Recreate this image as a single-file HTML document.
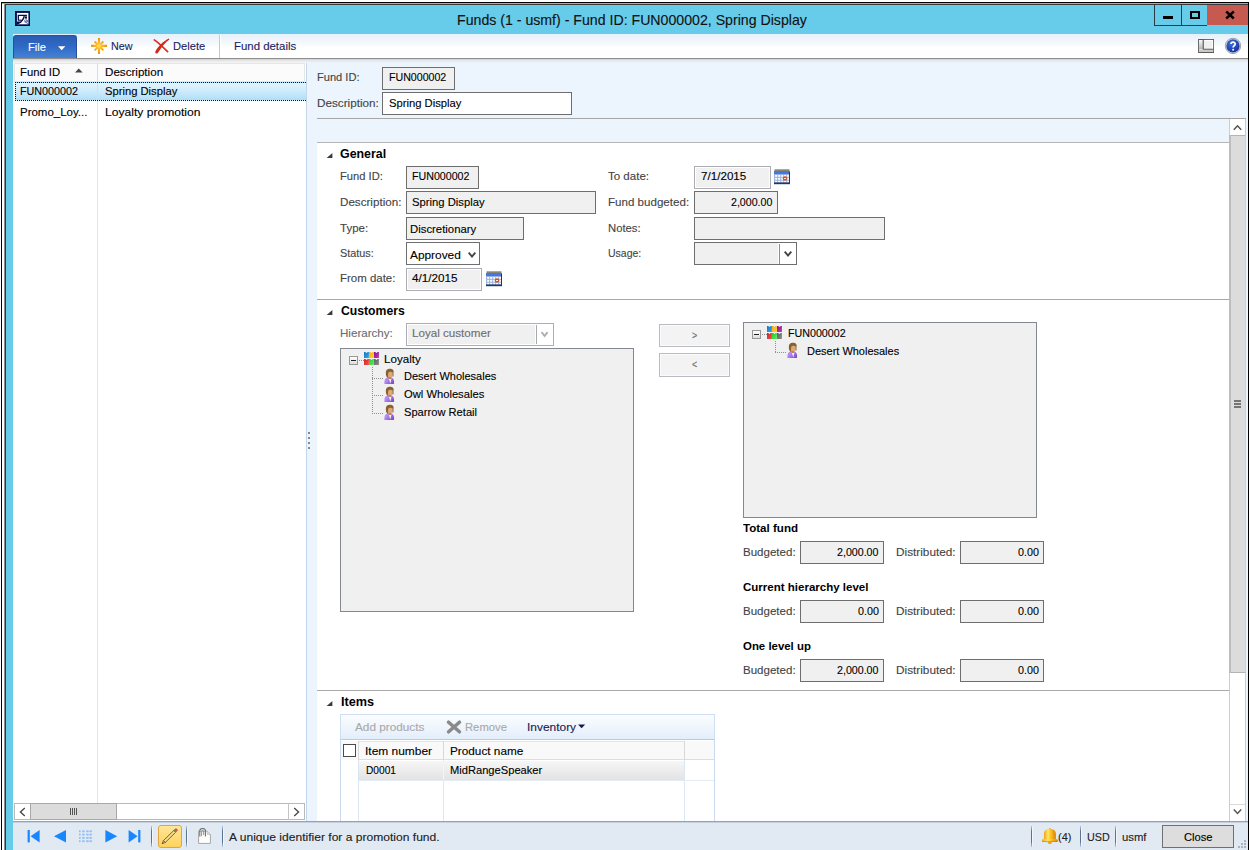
<!DOCTYPE html>
<html><head><meta charset="utf-8"><title>Funds</title>
<style>
html,body{margin:0;padding:0;}
body{width:1250px;height:850px;overflow:hidden;background:#fff;position:relative;font-family:"Liberation Sans",sans-serif;font-size:11.5px;}
.a{position:absolute;box-sizing:border-box;}
.t{position:absolute;white-space:nowrap;line-height:1;transform-origin:0 0;display:block;-webkit-text-stroke:0.12px currentColor;}
</style></head><body>
<div class="a" style="left:1px;top:2px;width:1248px;height:848px;background:#000;"></div>
<div class="a" style="left:2px;top:3px;width:1246px;height:847px;background:#fff;"></div>
<div class="a" style="left:2px;top:3px;width:1246px;height:1px;background:#aaa;"></div>
<div class="a" style="left:4px;top:4px;width:1244px;height:846px;background:#3a3a3a;"></div>
<div class="a" style="left:4px;top:4px;width:1px;height:846px;background:#8a8a8a;"></div>
<div class="a" style="left:6px;top:5px;width:1242px;height:845px;background:#67cbea;"></div>
<svg class="a" style="left:15px;top:11px" width="15" height="15" viewBox="0 0 15 15"><rect width="15" height="15" fill="#020a48"/><rect x="1.9" y="1.9" width="11.5" height="11.4" fill="#fff"/><path d="M3.3 9.6 V4.3 H11.9" stroke="#020a48" stroke-width="1.3" fill="none"/><path d="M3.3 9.2 H6.4" stroke="#020a48" stroke-width="1.1" fill="none"/><path d="M1.9 13.3 L1.9 10.6 L5.4 10.6 L7.6 7.6 L8.6 4.9 L9.8 4.9 L8.6 8.8 L6 11.8 L3 13.3 Z" fill="#020a48"/><rect x="9.6" y="5.4" width="2.4" height="2.2" fill="#020a48"/><path d="M9.2 9 L11.2 8.2 L13.4 9.6 L13.4 13.3 L9.4 11.2 Z" fill="#6f7aa6"/><path d="M10.2 9.4 L11.4 10.2 M12.2 11 L13 12" stroke="#fff" stroke-width="0.8"/></svg>
<div class="a" style="left:1154px;top:5px;width:53px;height:21px;background:#2b3b44;"></div>
<div class="a" style="left:1155px;top:5px;width:26px;height:20px;background:#67cbea;"></div>
<div class="a" style="left:1182px;top:5px;width:25px;height:20px;background:#67cbea;"></div>
<div class="a" style="left:1207px;top:5px;width:41px;height:20px;background:#c75a50;"></div>
<div class="a" style="left:1163px;top:16px;width:10px;height:3px;background:#000;"></div>
<div class="a" style="left:1190px;top:11px;width:10px;height:8px;border:1px solid #000;border-width:2px;"></div>
<svg class="a" style="left:1225px;top:10px" width="10" height="10" viewBox="0 0 10 10"><path d="M1.2 1.5 L8.8 8.5 M8.8 1.5 L1.2 8.5" stroke="#000" stroke-width="2.4" fill="none"/></svg>
<div class="a" style="left:13px;top:34px;width:1235px;height:24px;background:linear-gradient(#e6f0fa 0%,#f3f8fd 35%,#fff 60%,#fff 100%);"></div>
<div class="a" style="left:13px;top:58px;width:1235px;height:1px;background:#8e8e8e;"></div>
<div class="a" style="left:13px;top:35px;width:64px;height:23px;background:linear-gradient(#2a5db4 0%,#2f68c4 45%,#4583d6 100%);border:1px solid #27509a;border-bottom:none;border-radius:3px 3px 0 0;"></div>
<svg class="a" style="left:58px;top:46px" width="8" height="5" viewBox="0 0 8 5"><path d="M0 0.3 L7.4 0.3 L3.7 4.3 Z" fill="#fff"/></svg>
<svg class="a" style="left:90px;top:37px" width="18" height="18" viewBox="0 0 18 18"><defs><radialGradient id="sun" gradientUnits="userSpaceOnUse" cx="9" cy="8.9" r="8.2"><stop offset="0" stop-color="#ffe25a"/><stop offset="0.4" stop-color="#fdb728"/><stop offset="1" stop-color="#e8900e"/></radialGradient></defs><g stroke="url(#sun)" fill="none"><path d="M9 0.9 V16.9 M1 8.9 H17" stroke-width="2.1"/><path d="M4.6 4.5 L13.4 13.3 M13.4 4.5 L4.6 13.3" stroke-width="1.9"/></g><circle cx="9" cy="8.9" r="3.4" fill="url(#sun)"/></svg>
<svg class="a" style="left:153px;top:37px" width="18" height="18" viewBox="0 0 18 18"><path d="M1.3 2.9 C5.4 5.6 10 10.4 14.6 14.6" stroke="#d9321f" stroke-width="1.7" fill="none" stroke-linecap="round"/><path d="M15.9 1.6 C10.4 4.2 5.2 9.4 2.5 14.2 C1.8 16 3 17.3 4.6 16.2 C6 14.9 6.6 13.2 7.9 11.6 C10.2 8.2 12.9 5 16.4 2.5 Z" fill="#d12a1b"/></svg>
<div class="a" style="left:219px;top:35px;width:1px;height:23px;background:#c4c7cc;"></div>
<div class="a" style="left:220px;top:35px;width:1px;height:23px;background:#fff;"></div>
<svg class="a" style="left:1198px;top:39px" width="16" height="14" viewBox="0 0 16 14"><defs><linearGradient id="lg1" x1="0" y1="0" x2="0" y2="1"><stop offset="0" stop-color="#fafafa"/><stop offset="1" stop-color="#b4b4b4"/></linearGradient></defs><rect x="0.6" y="0.5" width="15" height="13" fill="#f1f0ee" stroke="#5c5c5c" stroke-width="1"/><rect x="1.1" y="1" width="3.6" height="9.2" fill="url(#lg1)"/><path d="M5.2 1 V10.3 H15.1" stroke="#4e4e4e" stroke-width="1.1" fill="none"/><path d="M6.2 1.4 H14.6 V9.4" stroke="#ffffff" stroke-width="0.9" fill="none"/><rect x="1.1" y="10.9" width="14" height="2.1" fill="#c9c9c9"/></svg>
<svg class="a" style="left:1224px;top:37px" width="18" height="18" viewBox="0 0 18 18"><defs><radialGradient id="hg" cx="0.4" cy="0.3" r="0.8"><stop offset="0" stop-color="#3f6fe0"/><stop offset="1" stop-color="#102a96"/></radialGradient></defs><circle cx="9" cy="8.9" r="7.7" fill="#d4d6dc" stroke="#9a9ca4" stroke-width="0.9"/><circle cx="9" cy="8.9" r="6.6" fill="url(#hg)"/><path d="M6.9 7 C6.9 4.4 11.2 4.4 11.2 7 C11.2 8.6 9.1 8.8 9.1 10.6" stroke="#fff" stroke-width="1.7" fill="none"/><circle cx="9.1" cy="12.7" r="1" fill="#fff"/></svg>
<div class="a" style="left:13px;top:60px;width:1235px;height:761px;background:#ecf5fd;"></div>
<div class="a" style="left:13px;top:60px;width:293px;height:761px;background:#fff;"></div>
<div class="a" style="left:13px;top:59px;width:293px;height:4px;background:linear-gradient(#d0d0d0,#e6e6e6 40%,#f6f6f6);"></div>
<div class="a" style="left:306px;top:62px;width:1px;height:759px;background:#c3d7ec;"></div>
<div class="a" style="left:306px;top:59px;width:942px;height:4px;background:linear-gradient(#d0d0d0,#e4e8ec 40%,#ecf5fd);"></div>
<div class="a" style="left:14px;top:63px;width:291px;height:19px;background:#fbfbfb;border:1px solid #e6e6e6;"></div>
<div class="a" style="left:97px;top:63px;width:1px;height:19px;background:#dcdcdc;"></div>
<svg class="a" style="left:75px;top:68px" width="8" height="5" viewBox="0 0 8 5"><path d="M0 4.6 L3.8 0.6 L7.6 4.6 Z" fill="#444"/></svg>
<div class="a" style="left:97px;top:101px;width:1px;height:702px;background:#d9e6f4;"></div>
<div class="a" style="left:15px;top:82px;width:291px;height:19px;background:linear-gradient(#e3f4fd 0%,#cdeafb 50%,#aedff8 100%);border:1px dotted #111;border-right:none;"></div>
<div class="a" style="left:97px;top:83px;width:1px;height:17px;background:#c7e2f5;"></div>
<div class="a" style="left:14px;top:803px;width:291px;height:17px;background:#fff;border:1px solid #b9b9b9;"></div>
<div class="a" style="left:30px;top:803px;width:87px;height:17px;background:#dcdcdc;border:1px solid #a8a8a8;"></div>
<svg class="a" style="left:19px;top:807px" width="7" height="10" viewBox="0 0 7 10"><path d="M5.8 1 L1.4 5 L5.8 9" stroke="#444" stroke-width="1.3" fill="none"/></svg>
<svg class="a" style="left:293px;top:807px" width="7" height="10" viewBox="0 0 7 10"><path d="M1.2 1 L5.6 5 L1.2 9" stroke="#444" stroke-width="1.3" fill="none"/></svg>
<div class="a" style="left:288px;top:803px;width:1px;height:17px;background:#c4c4c4;"></div>
<div class="a" style="left:70px;top:808px;width:1px;height:7px;background:#555;"></div>
<div class="a" style="left:72px;top:808px;width:1px;height:7px;background:#555;"></div>
<div class="a" style="left:74px;top:808px;width:1px;height:7px;background:#555;"></div>
<div class="a" style="left:76px;top:808px;width:1px;height:7px;background:#555;"></div>
<div class="a" style="left:308px;top:432px;width:2px;height:2px;background:#8a8a8a;"></div>
<div class="a" style="left:308px;top:437px;width:2px;height:2px;background:#8a8a8a;"></div>
<div class="a" style="left:308px;top:442px;width:2px;height:2px;background:#8a8a8a;"></div>
<div class="a" style="left:308px;top:447px;width:2px;height:2px;background:#8a8a8a;"></div>
<div class="a" style="left:382px;top:67px;width:73px;height:23px;background:#f0f0f0;border:1px solid #6e6e6e;"></div>
<div class="a" style="left:382px;top:92px;width:190px;height:23px;background:#fff;border:1px solid #6e6e6e;"></div>
<div class="a" style="left:317px;top:118px;width:929px;height:1px;background:#a6a6a6;"></div>
<div class="a" style="left:1229px;top:119px;width:17px;height:702px;background:#fff;"></div>
<div class="a" style="left:1229px;top:119px;width:1px;height:702px;background:#cdcdcd;"></div>
<div class="a" style="left:1245px;top:119px;width:1px;height:702px;background:#cdcdcd;"></div>
<div class="a" style="left:1229px;top:135px;width:17px;height:538px;background:#dcdcdc;border:1px solid #b4b4b4;border-left:2px solid #bdbdbd;border-right:1px solid #cfcfcf;"></div>
<svg class="a" style="left:1233px;top:124px" width="9" height="7" viewBox="0 0 9 7"><path d="M0.8 5.8 L4.5 1.8 L8.2 5.8" stroke="#555" stroke-width="1.5" fill="none"/></svg>
<svg class="a" style="left:1233px;top:808px" width="9" height="7" viewBox="0 0 9 7"><path d="M0.8 1.4 L4.5 5.4 L8.2 1.4" stroke="#555" stroke-width="1.5" fill="none"/></svg>
<div class="a" style="left:1230px;top:804px;width:15px;height:1px;background:#d9d9d9;"></div>
<div class="a" style="left:1234px;top:400px;width:7px;height:2px;background:#757575;"></div>
<div class="a" style="left:1234px;top:403px;width:7px;height:2px;background:#757575;"></div>
<div class="a" style="left:1234px;top:406px;width:7px;height:2px;background:#757575;"></div>
<div class="a" style="left:317px;top:142px;width:912px;height:679px;background:#fff;"></div>
<div class="a" style="left:317px;top:142px;width:912px;height:1px;background:#b5b5b5;"></div>
<svg class="a" style="left:326px;top:153px" width="7" height="6" viewBox="0 0 7 6"><path d="M6.4 0 L6.4 5 L0.6 5 Z" fill="#3a3a3a"/></svg>
<div class="a" style="left:406px;top:166px;width:73px;height:23px;background:#f0f0f0;border:1px solid #6e6e6e;"></div>
<div class="a" style="left:406px;top:191px;width:190px;height:23px;background:#f0f0f0;border:1px solid #6e6e6e;"></div>
<div class="a" style="left:406px;top:217px;width:118px;height:23px;background:#f0f0f0;border:1px solid #6e6e6e;"></div>
<div class="a" style="left:406px;top:242px;width:74px;height:23px;background:#fff;border:1px solid #6e6e6e;"></div>
<svg class="a" style="left:467px;top:251px" width="10" height="8" viewBox="0 0 10 8"><path d="M1.7 1.6 L5 5.5 L8.3 1.6" stroke="#444" stroke-width="1.9" fill="none"/></svg>
<div class="a" style="left:406px;top:268px;width:76px;height:23px;background:#fff;border:1px solid #abadb3;"></div>
<div class="a" style="left:408px;top:270px;width:72px;height:19px;background:#f0f0f0;"></div>
<svg class="a" style="left:486px;top:271px" width="16" height="16" viewBox="0 0 16 16"><rect x="0.5" y="0.3" width="15" height="2.2" fill="#8a8478"/><rect x="0" y="2" width="16" height="3.6" fill="#4378dc"/><rect x="0" y="5.4" width="16" height="8.4" fill="#9db7dc"/><rect x="1.2" y="6.0" width="1.9" height="1.8" fill="#fff"/><rect x="1.2" y="8.9" width="1.9" height="1.8" fill="#fff"/><rect x="1.2" y="11.8" width="1.9" height="1.8" fill="#fff"/><rect x="4.2" y="6.0" width="1.9" height="1.8" fill="#fff"/><rect x="4.2" y="8.9" width="1.9" height="1.8" fill="#fff"/><rect x="4.2" y="11.8" width="1.9" height="1.8" fill="#fff"/><rect x="7.2" y="6.0" width="1.9" height="1.8" fill="#fff"/><rect x="7.2" y="8.9" width="1.9" height="1.8" fill="#fff"/><rect x="7.2" y="11.8" width="1.9" height="1.8" fill="#fff"/><rect x="10.2" y="6.0" width="1.9" height="1.8" fill="#fff"/><rect x="10.2" y="8.9" width="1.9" height="1.8" fill="#fff"/><rect x="10.2" y="11.8" width="1.9" height="1.8" fill="#fff"/><rect x="13.2" y="6.0" width="1.9" height="1.8" fill="#fff"/><rect x="13.2" y="8.9" width="1.9" height="1.8" fill="#fff"/><rect x="13.2" y="11.8" width="1.9" height="1.8" fill="#fff"/><rect x="0" y="13.4" width="16" height="1.8" fill="#1c3868"/><rect x="15" y="3" width="1" height="12" fill="#1c3868"/><circle cx="11" cy="9.4" r="2.2" fill="#e24a16"/><rect x="10" y="9" width="2" height="0.9" fill="#fff"/></svg>
<div class="a" style="left:694px;top:166px;width:77px;height:23px;background:#fff;border:1px solid #abadb3;"></div>
<div class="a" style="left:696px;top:168px;width:73px;height:19px;background:#f0f0f0;"></div>
<svg class="a" style="left:774px;top:169px" width="16" height="16" viewBox="0 0 16 16"><rect x="0.5" y="0.3" width="15" height="2.2" fill="#8a8478"/><rect x="0" y="2" width="16" height="3.6" fill="#4378dc"/><rect x="0" y="5.4" width="16" height="8.4" fill="#9db7dc"/><rect x="1.2" y="6.0" width="1.9" height="1.8" fill="#fff"/><rect x="1.2" y="8.9" width="1.9" height="1.8" fill="#fff"/><rect x="1.2" y="11.8" width="1.9" height="1.8" fill="#fff"/><rect x="4.2" y="6.0" width="1.9" height="1.8" fill="#fff"/><rect x="4.2" y="8.9" width="1.9" height="1.8" fill="#fff"/><rect x="4.2" y="11.8" width="1.9" height="1.8" fill="#fff"/><rect x="7.2" y="6.0" width="1.9" height="1.8" fill="#fff"/><rect x="7.2" y="8.9" width="1.9" height="1.8" fill="#fff"/><rect x="7.2" y="11.8" width="1.9" height="1.8" fill="#fff"/><rect x="10.2" y="6.0" width="1.9" height="1.8" fill="#fff"/><rect x="10.2" y="8.9" width="1.9" height="1.8" fill="#fff"/><rect x="10.2" y="11.8" width="1.9" height="1.8" fill="#fff"/><rect x="13.2" y="6.0" width="1.9" height="1.8" fill="#fff"/><rect x="13.2" y="8.9" width="1.9" height="1.8" fill="#fff"/><rect x="13.2" y="11.8" width="1.9" height="1.8" fill="#fff"/><rect x="0" y="13.4" width="16" height="1.8" fill="#1c3868"/><rect x="15" y="3" width="1" height="12" fill="#1c3868"/><circle cx="11" cy="9.4" r="2.2" fill="#e24a16"/><rect x="10" y="9" width="2" height="0.9" fill="#fff"/></svg>
<div class="a" style="left:694px;top:191px;width:84px;height:23px;background:#f0f0f0;border:1px solid #6e6e6e;"></div>
<div class="a" style="left:694px;top:217px;width:191px;height:23px;background:#f0f0f0;border:1px solid #6e6e6e;"></div>
<div class="a" style="left:694px;top:242px;width:103px;height:23px;background:#f0f0f0;border:1px solid #6e6e6e;"></div>
<div class="a" style="left:778px;top:243px;width:18px;height:21px;background:#fff;"></div>
<div class="a" style="left:779px;top:244px;width:1px;height:20px;background:#8c8c8c;"></div>
<svg class="a" style="left:783px;top:250px" width="10" height="8" viewBox="0 0 10 8"><path d="M1.7 1.6 L5 5.5 L8.3 1.6" stroke="#444" stroke-width="1.9" fill="none"/></svg>
<div class="a" style="left:317px;top:299px;width:912px;height:1px;background:#a8a8a8;"></div>
<svg class="a" style="left:326px;top:310px" width="7" height="6" viewBox="0 0 7 6"><path d="M6.4 0 L6.4 5 L0.6 5 Z" fill="#3a3a3a"/></svg>
<div class="a" style="left:406px;top:323px;width:148px;height:23px;background:#fff;border:1px solid #abafb5;"></div>
<div class="a" style="left:408px;top:325px;width:127px;height:19px;background:#f0f0f0;"></div>
<div class="a" style="left:536px;top:325px;width:1px;height:19px;background:#a6aab0;"></div>
<svg class="a" style="left:540px;top:331px" width="10" height="8" viewBox="0 0 10 8"><path d="M1.6 1.2 L4.6 5 L7.6 1.2" stroke="#aeaeae" stroke-width="1.9" fill="none"/></svg>
<div class="a" style="left:340px;top:348px;width:294px;height:264px;background:#f0f0f0;border:1px solid #828790;"></div>
<div class="a" style="left:349px;top:356px;width:9px;height:9px;background:linear-gradient(#fff,#dcdcdc);border:1px solid #979797;"></div>
<div class="a" style="left:351px;top:360px;width:5px;height:1px;background:#222;"></div>
<div class="a" style="left:359px;top:360px;width:5px;height:1px;background:repeating-linear-gradient(90deg,#909090 0 1px,transparent 1px 2px);"></div>
<svg class="a" style="left:364px;top:352px" width="15" height="13" viewBox="0 0 15 13"><defs><linearGradient id="hi00" x1="0" y1="0" x2="1" y2="1"><stop offset="0" stop-color="#0c78c6"/><stop offset="1" stop-color="#36a4ea"/></linearGradient><linearGradient id="hi01" x1="0" y1="0" x2="1" y2="1"><stop offset="0" stop-color="#ffa810"/><stop offset="1" stop-color="#ffd028"/></linearGradient><linearGradient id="hi02" x1="0" y1="0" x2="1" y2="1"><stop offset="0" stop-color="#8e0e92"/><stop offset="1" stop-color="#b43cb8"/></linearGradient><linearGradient id="hi10" x1="0" y1="0" x2="1" y2="1"><stop offset="0" stop-color="#d42424"/><stop offset="1" stop-color="#ee5050"/></linearGradient><linearGradient id="hi11" x1="0" y1="0" x2="1" y2="1"><stop offset="0" stop-color="#28c82e"/><stop offset="1" stop-color="#58ee5c"/></linearGradient><linearGradient id="hi12" x1="0" y1="0" x2="1" y2="1"><stop offset="0" stop-color="#606060"/><stop offset="1" stop-color="#8c8c8c"/></linearGradient></defs><path d="M0 0 L1.2 0 L2.45 1 L3.7 0 L4.9 0 L4.9 6 L0 6 Z" fill="url(#hi00)"/><path d="M5 0 L6.2 0 L7.45 1 L8.7 0 L9.9 0 L9.9 6 L5 6 Z" fill="url(#hi01)"/><path d="M10 0 L11.2 0 L12.45 1 L13.7 0 L14.9 0 L14.9 6 L10 6 Z" fill="url(#hi02)"/><path d="M0 7 L1.2 7 L2.45 8 L3.7 7 L4.9 7 L4.9 13 L0 13 Z" fill="url(#hi10)"/><path d="M5 7 L6.2 7 L7.45 8 L8.7 7 L9.9 7 L9.9 13 L5 13 Z" fill="url(#hi11)"/><path d="M10 7 L11.2 7 L12.45 8 L13.7 7 L14.9 7 L14.9 13 L10 13 Z" fill="url(#hi12)"/></svg>
<div class="a" style="left:372px;top:367px;width:1px;height:46px;background:repeating-linear-gradient(180deg,#909090 0 1px,transparent 1px 2px);"></div>
<div class="a" style="left:372px;top:378px;width:11px;height:1px;background:repeating-linear-gradient(90deg,#909090 0 1px,transparent 1px 2px);"></div>
<svg class="a" style="left:384px;top:368.3px" width="11" height="16" viewBox="0 0 11 16"><defs><linearGradient id="pg" x1="0" y1="0" x2="1" y2="0.6"><stop offset="0" stop-color="#a878e8"/><stop offset="0.35" stop-color="#b98cf6"/><stop offset="1" stop-color="#8452c4"/></linearGradient></defs><path d="M0.4 15.9 C0.1 12 1.2 10.1 3.4 9.5 L7.4 9.5 C9.4 10.1 10.4 12 10.1 15.9 Z" fill="url(#pg)"/><path d="M4.7 10.2 L6.3 15.6 L7.5 10.4 Z" fill="#eef5f4"/><rect x="4.8" y="8.4" width="2.4" height="2.4" fill="#b4702a"/><ellipse cx="6.3" cy="6.3" rx="2.6" ry="3.1" fill="#dba877"/><path d="M3.5 9.8 C1.5 8.2 1.4 3.6 2.6 2.1 C4 0.5 7.6 0.5 8.9 1.7 C9.9 2.5 9.7 3.7 9.5 4.5 L9.5 8.2 L8.7 8.9 L8.5 4.6 C7 3.5 5.2 3.7 4.3 4.7 C3.8 6.2 4 8.2 4.7 9.8 Z" fill="#8a6030"/></svg>
<div class="a" style="left:372px;top:395px;width:11px;height:1px;background:repeating-linear-gradient(90deg,#909090 0 1px,transparent 1px 2px);"></div>
<svg class="a" style="left:384px;top:386.0px" width="11" height="16" viewBox="0 0 11 16"><defs><linearGradient id="pg" x1="0" y1="0" x2="1" y2="0.6"><stop offset="0" stop-color="#a878e8"/><stop offset="0.35" stop-color="#b98cf6"/><stop offset="1" stop-color="#8452c4"/></linearGradient></defs><path d="M0.4 15.9 C0.1 12 1.2 10.1 3.4 9.5 L7.4 9.5 C9.4 10.1 10.4 12 10.1 15.9 Z" fill="url(#pg)"/><path d="M4.7 10.2 L6.3 15.6 L7.5 10.4 Z" fill="#eef5f4"/><rect x="4.8" y="8.4" width="2.4" height="2.4" fill="#b4702a"/><ellipse cx="6.3" cy="6.3" rx="2.6" ry="3.1" fill="#dba877"/><path d="M3.5 9.8 C1.5 8.2 1.4 3.6 2.6 2.1 C4 0.5 7.6 0.5 8.9 1.7 C9.9 2.5 9.7 3.7 9.5 4.5 L9.5 8.2 L8.7 8.9 L8.5 4.6 C7 3.5 5.2 3.7 4.3 4.7 C3.8 6.2 4 8.2 4.7 9.8 Z" fill="#8a6030"/></svg>
<div class="a" style="left:372px;top:413px;width:11px;height:1px;background:repeating-linear-gradient(90deg,#909090 0 1px,transparent 1px 2px);"></div>
<svg class="a" style="left:384px;top:403.7px" width="11" height="16" viewBox="0 0 11 16"><defs><linearGradient id="pg" x1="0" y1="0" x2="1" y2="0.6"><stop offset="0" stop-color="#a878e8"/><stop offset="0.35" stop-color="#b98cf6"/><stop offset="1" stop-color="#8452c4"/></linearGradient></defs><path d="M0.4 15.9 C0.1 12 1.2 10.1 3.4 9.5 L7.4 9.5 C9.4 10.1 10.4 12 10.1 15.9 Z" fill="url(#pg)"/><path d="M4.7 10.2 L6.3 15.6 L7.5 10.4 Z" fill="#eef5f4"/><rect x="4.8" y="8.4" width="2.4" height="2.4" fill="#b4702a"/><ellipse cx="6.3" cy="6.3" rx="2.6" ry="3.1" fill="#dba877"/><path d="M3.5 9.8 C1.5 8.2 1.4 3.6 2.6 2.1 C4 0.5 7.6 0.5 8.9 1.7 C9.9 2.5 9.7 3.7 9.5 4.5 L9.5 8.2 L8.7 8.9 L8.5 4.6 C7 3.5 5.2 3.7 4.3 4.7 C3.8 6.2 4 8.2 4.7 9.8 Z" fill="#8a6030"/></svg>
<div class="a" style="left:659px;top:324px;width:71px;height:23px;background:#f3f3f3;border:1px solid #b9bcc3;"></div>
<div class="a" style="left:660px;top:325px;width:69px;height:21px;border:1px solid #fbfbfb;"></div>
<div class="a" style="left:659px;top:353px;width:71px;height:24px;background:#f3f3f3;border:1px solid #b9bcc3;"></div>
<div class="a" style="left:660px;top:354px;width:69px;height:22px;border:1px solid #fbfbfb;"></div>
<div class="a" style="left:743px;top:322px;width:294px;height:196px;background:#f0f0f0;border:1px solid #828790;"></div>
<div class="a" style="left:752px;top:330px;width:9px;height:9px;background:linear-gradient(#fff,#dcdcdc);border:1px solid #979797;"></div>
<div class="a" style="left:754px;top:334px;width:5px;height:1px;background:#222;"></div>
<div class="a" style="left:762px;top:334px;width:5px;height:1px;background:repeating-linear-gradient(90deg,#909090 0 1px,transparent 1px 2px);"></div>
<svg class="a" style="left:767px;top:326px" width="15" height="13" viewBox="0 0 15 13"><defs><linearGradient id="hi00" x1="0" y1="0" x2="1" y2="1"><stop offset="0" stop-color="#0c78c6"/><stop offset="1" stop-color="#36a4ea"/></linearGradient><linearGradient id="hi01" x1="0" y1="0" x2="1" y2="1"><stop offset="0" stop-color="#ffa810"/><stop offset="1" stop-color="#ffd028"/></linearGradient><linearGradient id="hi02" x1="0" y1="0" x2="1" y2="1"><stop offset="0" stop-color="#8e0e92"/><stop offset="1" stop-color="#b43cb8"/></linearGradient><linearGradient id="hi10" x1="0" y1="0" x2="1" y2="1"><stop offset="0" stop-color="#d42424"/><stop offset="1" stop-color="#ee5050"/></linearGradient><linearGradient id="hi11" x1="0" y1="0" x2="1" y2="1"><stop offset="0" stop-color="#28c82e"/><stop offset="1" stop-color="#58ee5c"/></linearGradient><linearGradient id="hi12" x1="0" y1="0" x2="1" y2="1"><stop offset="0" stop-color="#606060"/><stop offset="1" stop-color="#8c8c8c"/></linearGradient></defs><path d="M0 0 L1.2 0 L2.45 1 L3.7 0 L4.9 0 L4.9 6 L0 6 Z" fill="url(#hi00)"/><path d="M5 0 L6.2 0 L7.45 1 L8.7 0 L9.9 0 L9.9 6 L5 6 Z" fill="url(#hi01)"/><path d="M10 0 L11.2 0 L12.45 1 L13.7 0 L14.9 0 L14.9 6 L10 6 Z" fill="url(#hi02)"/><path d="M0 7 L1.2 7 L2.45 8 L3.7 7 L4.9 7 L4.9 13 L0 13 Z" fill="url(#hi10)"/><path d="M5 7 L6.2 7 L7.45 8 L8.7 7 L9.9 7 L9.9 13 L5 13 Z" fill="url(#hi11)"/><path d="M10 7 L11.2 7 L12.45 8 L13.7 7 L14.9 7 L14.9 13 L10 13 Z" fill="url(#hi12)"/></svg>
<div class="a" style="left:775px;top:341px;width:1px;height:11px;background:repeating-linear-gradient(180deg,#909090 0 1px,transparent 1px 2px);"></div>
<div class="a" style="left:775px;top:352px;width:11px;height:1px;background:repeating-linear-gradient(90deg,#909090 0 1px,transparent 1px 2px);"></div>
<svg class="a" style="left:787px;top:342.4px" width="11" height="16" viewBox="0 0 11 16"><defs><linearGradient id="pg" x1="0" y1="0" x2="1" y2="0.6"><stop offset="0" stop-color="#a878e8"/><stop offset="0.35" stop-color="#b98cf6"/><stop offset="1" stop-color="#8452c4"/></linearGradient></defs><path d="M0.4 15.9 C0.1 12 1.2 10.1 3.4 9.5 L7.4 9.5 C9.4 10.1 10.4 12 10.1 15.9 Z" fill="url(#pg)"/><path d="M4.7 10.2 L6.3 15.6 L7.5 10.4 Z" fill="#eef5f4"/><rect x="4.8" y="8.4" width="2.4" height="2.4" fill="#b4702a"/><ellipse cx="6.3" cy="6.3" rx="2.6" ry="3.1" fill="#dba877"/><path d="M3.5 9.8 C1.5 8.2 1.4 3.6 2.6 2.1 C4 0.5 7.6 0.5 8.9 1.7 C9.9 2.5 9.7 3.7 9.5 4.5 L9.5 8.2 L8.7 8.9 L8.5 4.6 C7 3.5 5.2 3.7 4.3 4.7 C3.8 6.2 4 8.2 4.7 9.8 Z" fill="#8a6030"/></svg>
<div class="a" style="left:800px;top:541px;width:84px;height:23px;background:#f0f0f0;border:1px solid #6e6e6e;"></div>
<div class="a" style="left:960px;top:541px;width:84px;height:23px;background:#f0f0f0;border:1px solid #6e6e6e;"></div>
<div class="a" style="left:800px;top:600px;width:84px;height:23px;background:#f0f0f0;border:1px solid #6e6e6e;"></div>
<div class="a" style="left:960px;top:600px;width:84px;height:23px;background:#f0f0f0;border:1px solid #6e6e6e;"></div>
<div class="a" style="left:800px;top:659px;width:84px;height:23px;background:#f0f0f0;border:1px solid #6e6e6e;"></div>
<div class="a" style="left:960px;top:659px;width:84px;height:23px;background:#f0f0f0;border:1px solid #6e6e6e;"></div>
<div class="a" style="left:317px;top:690px;width:912px;height:1px;background:#a8a8a8;"></div>
<svg class="a" style="left:326px;top:701px" width="7" height="6" viewBox="0 0 7 6"><path d="M6.4 0 L6.4 5 L0.6 5 Z" fill="#3a3a3a"/></svg>
<div class="a" style="left:340px;top:714px;width:375px;height:26px;background:linear-gradient(#fbfdff,#e3eefb);border:1px solid #cfdff1;border-bottom-color:#b7cbe4;"></div>
<svg class="a" style="left:446px;top:720px" width="16" height="14" viewBox="0 0 16 14"><path d="M2.6 2.2 L13.4 11.8 M13.4 2.2 L2.6 11.8" stroke="#8a8a8a" stroke-width="3.5" fill="none" stroke-linecap="round"/></svg>
<svg class="a" style="left:578px;top:724px" width="8" height="5" viewBox="0 0 8 5"><path d="M0 0.4 L7.2 0.4 L3.6 4.2 Z" fill="#1a1a50"/></svg>
<div class="a" style="left:340px;top:740px;width:375px;height:81px;background:#fff;border-left:1px solid #c9daee;border-right:1px solid #c9daee;"></div>
<div class="a" style="left:341px;top:741px;width:373px;height:19px;background:#f9f9f9;"></div>
<div class="a" style="left:358px;top:759px;width:356px;height:1px;background:#dedede;"></div>
<div class="a" style="left:358px;top:741px;width:327px;height:1px;background:#e4e4e4;"></div>
<div class="a" style="left:343px;top:744px;width:13px;height:13px;background:#fff;border:1px solid #4a4a4a;"></div>
<div class="a" style="left:358px;top:741px;width:1px;height:80px;background:#dbe6f3;"></div>
<div class="a" style="left:443px;top:741px;width:1px;height:80px;background:#dbe6f3;"></div>
<div class="a" style="left:684px;top:741px;width:1px;height:80px;background:#dbe6f3;"></div>
<div class="a" style="left:358px;top:741px;width:1px;height:19px;background:#d8d8d8;"></div>
<div class="a" style="left:443px;top:741px;width:1px;height:19px;background:#d8d8d8;"></div>
<div class="a" style="left:684px;top:741px;width:1px;height:19px;background:#d8d8d8;"></div>
<div class="a" style="left:359px;top:761px;width:325px;height:19px;background:linear-gradient(#f6f6f6,#e3e3e3);"></div>
<div class="a" style="left:443px;top:761px;width:1px;height:19px;background:#f4f4f4;"></div>
<div class="a" style="left:358px;top:780px;width:356px;height:1px;background:#e3ebf5;"></div>
<div class="a" style="left:13px;top:821px;width:1235px;height:29px;background:#e1e9f2;"></div>
<div class="a" style="left:13px;top:821px;width:1235px;height:1px;background:#8fa3ba;"></div>
<div class="a" style="left:13px;top:822px;width:1235px;height:1px;background:#c5d1df;"></div>
<svg class="a" style="left:27px;top:830px" width="14" height="13" viewBox="0 0 14 13"><rect x="0.6" y="0" width="2.2" height="12.4" fill="#1787ff"/><path d="M12.6 0 L12.6 12.4 L3.6 6.2 Z" fill="#1787ff"/></svg>
<svg class="a" style="left:53px;top:830px" width="14" height="13" viewBox="0 0 14 13"><path d="M13 0 L13 12.4 L1 6.2 Z" fill="#1787ff"/></svg>
<svg class="a" style="left:79px;top:830px" width="13" height="13" viewBox="0 0 13 13"><rect x="0.0" y="0.4" width="1.6" height="1.8" fill="#8fbdf6"/><rect x="0.0" y="3.6999999999999997" width="1.6" height="1.8" fill="#8fbdf6"/><rect x="0.0" y="7.0" width="1.6" height="1.8" fill="#8fbdf6"/><rect x="0.0" y="10.299999999999999" width="1.6" height="1.8" fill="#8fbdf6"/><rect x="3.2" y="0.4" width="2.4" height="1.8" fill="#8fbdf6"/><rect x="3.2" y="3.6999999999999997" width="2.4" height="1.8" fill="#8fbdf6"/><rect x="3.2" y="7.0" width="2.4" height="1.8" fill="#8fbdf6"/><rect x="3.2" y="10.299999999999999" width="2.4" height="1.8" fill="#8fbdf6"/><rect x="7.2" y="0.4" width="2.4" height="1.8" fill="#8fbdf6"/><rect x="7.2" y="3.6999999999999997" width="2.4" height="1.8" fill="#8fbdf6"/><rect x="7.2" y="7.0" width="2.4" height="1.8" fill="#8fbdf6"/><rect x="7.2" y="10.299999999999999" width="2.4" height="1.8" fill="#8fbdf6"/><rect x="10.400000000000002" y="0.4" width="2.4" height="1.8" fill="#8fbdf6"/><rect x="10.400000000000002" y="3.6999999999999997" width="2.4" height="1.8" fill="#8fbdf6"/><rect x="10.400000000000002" y="7.0" width="2.4" height="1.8" fill="#8fbdf6"/><rect x="10.400000000000002" y="10.299999999999999" width="2.4" height="1.8" fill="#8fbdf6"/></svg>
<svg class="a" style="left:105px;top:830px" width="14" height="13" viewBox="0 0 14 13"><path d="M0.4 0 L0.4 12.4 L12.2 6.2 Z" fill="#1787ff"/></svg>
<svg class="a" style="left:128px;top:830px" width="14" height="13" viewBox="0 0 14 13"><rect x="10.2" y="0" width="2.2" height="12.4" fill="#1787ff"/><path d="M0.6 0 L0.6 12.4 L9.6 6.2 Z" fill="#1787ff"/></svg>
<div class="a" style="left:151px;top:826px;width:1px;height:21px;background:linear-gradient(#b9c7d8 0%,#5a7394 25%,#5a7394 75%,#b9c7d8 100%);"></div>
<div class="a" style="left:152px;top:827px;width:1px;height:19px;background:#f2f6fb;"></div>
<div class="a" style="left:158px;top:825px;width:24px;height:23px;background:linear-gradient(#ffe69a,#ffd25c);border:1px solid #e3a53a;border-radius:3px;"></div>
<svg class="a" style="left:160px;top:827px" width="20" height="19" viewBox="0 0 20 19"><path d="M3.4 13.7 L13.8 3.5 L15.6 5.3 L5.2 15.5 Z" fill="#f7e28e" stroke="#4a3c1a" stroke-width="0.8"/><path d="M13.8 3.5 L14.5 2.8 L16.3 4.6 L15.6 5.3 Z" fill="#4fa070"/><path d="M14.5 2.8 L15.5 1.8 C16.3 1.4 17.8 2.9 17.3 3.6 L16.3 4.6 Z" fill="#e25a5a" stroke="#7a3030" stroke-width="0.5"/><path d="M2.2 16.7 L3.4 13.7 L5.2 15.5 Z" fill="#f1d9b4" stroke="#4a3c1a" stroke-width="0.6"/><path d="M2.2 16.7 L2.8 15.2 L3.7 16.1 Z" fill="#111"/></svg>
<div class="a" style="left:186px;top:826px;width:1px;height:21px;background:linear-gradient(#b9c7d8 0%,#5a7394 25%,#5a7394 75%,#b9c7d8 100%);"></div>
<div class="a" style="left:187px;top:827px;width:1px;height:19px;background:#f2f6fb;"></div>
<svg class="a" style="left:198px;top:828px" width="13" height="16" viewBox="0 0 13 16"><path d="M0.6 3.2 L9.2 3.2 L12.4 6.4 L12.4 15.4 L0.6 15.4 Z" fill="#fdfdfd" stroke="#a6a6a6" stroke-width="1"/><path d="M9.2 3.2 L9.2 6.4 L12.4 6.4" fill="#e8e8e8" stroke="#b4b4b4" stroke-width="0.7"/><path d="M1.8 8.6 V2.6 C1.8 -0.2 7.4 -0.2 7.4 2.6 V8.6" stroke="#707070" stroke-width="1.1" fill="none"/><path d="M3.6 8.2 V3.4 C3.6 2 5.6 2 5.6 3.4 V7" stroke="#8a8a8a" stroke-width="0.9" fill="none"/></svg>
<div class="a" style="left:222px;top:826px;width:1px;height:21px;background:linear-gradient(#b9c7d8 0%,#5a7394 25%,#5a7394 75%,#b9c7d8 100%);"></div>
<div class="a" style="left:223px;top:827px;width:1px;height:19px;background:#f2f6fb;"></div>
<div class="a" style="left:1031px;top:826px;width:1px;height:21px;background:linear-gradient(#b9c7d8 0%,#5a7394 25%,#5a7394 75%,#b9c7d8 100%);"></div>
<div class="a" style="left:1032px;top:827px;width:1px;height:19px;background:#f2f6fb;"></div>
<svg class="a" style="left:1041px;top:827px" width="18" height="18" viewBox="0 0 18 18"><defs><linearGradient id="bl" x1="0" x2="1"><stop offset="0" stop-color="#f2a410"/><stop offset="0.35" stop-color="#ffe468"/><stop offset="0.6" stop-color="#fbbc1c"/><stop offset="1" stop-color="#d8820a"/></linearGradient></defs><circle cx="8.9" cy="2.2" r="1.1" fill="#f4b020"/><path d="M2.9 12.6 L2.9 7.4 C2.9 3.6 5 2 8.9 2 C12.8 2 14.9 3.6 14.9 7.4 L14.9 12.6 Z" fill="url(#bl)"/><rect x="0.9" y="12.2" width="16" height="2.7" rx="1.2" fill="url(#bl)"/><rect x="0.9" y="14" width="16" height="0.9" rx="0.4" fill="#c97808" opacity="0.55"/><ellipse cx="8.9" cy="15.4" rx="2.1" ry="1.5" fill="#f0a410"/></svg>
<div class="a" style="left:1080px;top:826px;width:1px;height:21px;background:linear-gradient(#b9c7d8 0%,#5a7394 25%,#5a7394 75%,#b9c7d8 100%);"></div>
<div class="a" style="left:1081px;top:827px;width:1px;height:19px;background:#f2f6fb;"></div>
<div class="a" style="left:1115px;top:826px;width:1px;height:21px;background:linear-gradient(#b9c7d8 0%,#5a7394 25%,#5a7394 75%,#b9c7d8 100%);"></div>
<div class="a" style="left:1116px;top:827px;width:1px;height:19px;background:#f2f6fb;"></div>
<div class="a" style="left:1162px;top:825px;width:72px;height:23px;background:#dddddd;border:1px solid #707070;"></div>
<div class="a" style="left:1238px;top:846px;width:2px;height:2px;background:#a8b4c2;"></div>
<div class="a" style="left:1241px;top:843px;width:2px;height:2px;background:#a8b4c2;"></div>
<div class="a" style="left:1241px;top:846px;width:2px;height:2px;background:#a8b4c2;"></div>
<div class="a" style="left:1244px;top:840px;width:2px;height:2px;background:#a8b4c2;"></div>
<div class="a" style="left:1244px;top:843px;width:2px;height:2px;background:#a8b4c2;"></div>
<div class="a" style="left:1244px;top:846px;width:2px;height:2px;background:#a8b4c2;"></div>
<span class="t" id="t0" style="left:456.66px;top:12.00px;font-size:15px;color:#111;transform:scaleX(0.9431);">Funds (1 - usmf) - Fund ID: FUN000002, Spring Display</span>
<span class="t" id="t1" style="left:27.50px;top:42.00px;font-size:11.5px;color:#fff;transform:scaleX(0.9650);">File</span>
<span class="t" id="t2" style="left:110.60px;top:41.00px;font-size:11.5px;color:#1e1e62;transform:scaleX(0.9367);">New</span>
<span class="t" id="t3" style="left:173.00px;top:41.00px;font-size:11.5px;color:#1e1e62;transform:scaleX(0.9681);">Delete</span>
<span class="t" id="t4" style="left:233.60px;top:41.00px;font-size:11.5px;color:#1e1e62;transform:scaleX(0.9921);">Fund details</span>
<span class="t" id="t5" style="left:19.60px;top:67.00px;font-size:11.5px;color:#000;transform:scaleX(0.9802);">Fund ID</span>
<span class="t" id="t6" style="left:104.70px;top:67.00px;font-size:11.5px;color:#000;transform:scaleX(1.0100);">Description</span>
<span class="t" id="t7" style="left:19.60px;top:86.00px;font-size:11.5px;color:#000;transform:scaleX(0.9349);">FUN000002</span>
<span class="t" id="t8" style="left:104.70px;top:86.00px;font-size:11.5px;color:#000;transform:scaleX(0.9745);">Spring Display</span>
<span class="t" id="t9" style="left:19.60px;top:107.00px;font-size:11.5px;color:#000;transform:scaleX(0.9978);">Promo_Loy...</span>
<span class="t" id="t10" style="left:104.70px;top:107.00px;font-size:11.5px;color:#000;transform:scaleX(1.0512);">Loyalty promotion</span>
<span class="t" id="t11" style="left:317.00px;top:72.00px;font-size:11.5px;color:#444444;transform:scaleX(0.9634);">Fund ID:</span>
<span class="t" id="t12" style="left:388.80px;top:72.00px;font-size:11.5px;color:#000;transform:scaleX(0.9235);">FUN000002</span>
<span class="t" id="t13" style="left:317.00px;top:98.00px;font-size:11.5px;color:#444444;transform:scaleX(1.0178);">Description:</span>
<span class="t" id="t14" style="left:388.80px;top:98.00px;font-size:11.5px;color:#000;transform:scaleX(0.9772);">Spring Display</span>
<span class="t" id="t15" style="left:340.00px;top:147.00px;font-size:13px;color:#000;font-weight:bold;-webkit-text-stroke:0;transform:scaleX(0.9539);">General</span>
<span class="t" id="t16" style="left:340.40px;top:171.00px;font-size:11.5px;color:#444444;transform:scaleX(0.9702);">Fund ID:</span>
<span class="t" id="t17" style="left:412.40px;top:171.00px;font-size:11.5px;color:#000;transform:scaleX(0.9267);">FUN000002</span>
<span class="t" id="t18" style="left:340.40px;top:197.00px;font-size:11.5px;color:#444444;transform:scaleX(1.0112);">Description:</span>
<span class="t" id="t19" style="left:412.40px;top:197.00px;font-size:11.5px;color:#000;transform:scaleX(0.9786);">Spring Display</span>
<span class="t" id="t20" style="left:340.40px;top:223.00px;font-size:11.5px;color:#444444;transform:scaleX(0.9989);">Type:</span>
<span class="t" id="t21" style="left:410.30px;top:224.00px;font-size:11.5px;color:#000;transform:scaleX(0.9873);">Discretionary</span>
<span class="t" id="t22" style="left:340.40px;top:248.00px;font-size:11.5px;color:#444444;transform:scaleX(0.9438);">Status:</span>
<span class="t" id="t23" style="left:410.00px;top:250.00px;font-size:11.5px;color:#000;transform:scaleX(1.0321);">Approved</span>
<span class="t" id="t24" style="left:340.40px;top:273.00px;font-size:11.5px;color:#444444;transform:scaleX(0.9963);">From date:</span>
<span class="t" id="t25" style="left:412.40px;top:273.00px;font-size:11.5px;color:#000;transform:scaleX(1.0165);">4/1/2015</span>
<span class="t" id="t26" style="left:608.40px;top:171.00px;font-size:11.5px;color:#444444;transform:scaleX(1.0019);">To date:</span>
<span class="t" id="t27" style="left:700.80px;top:171.00px;font-size:11.5px;color:#000;transform:scaleX(1.0120);">7/1/2015</span>
<span class="t" id="t28" style="left:608.40px;top:197.00px;font-size:11.5px;color:#444444;transform:scaleX(1.0066);">Fund budgeted:</span>
<span class="t" id="t29" style="left:731.30px;top:197.00px;font-size:11.5px;color:#000;transform:scaleX(0.9241);">2,000.00</span>
<span class="t" id="t30" style="left:608.40px;top:223.00px;font-size:11.5px;color:#444444;transform:scaleX(0.9806);">Notes:</span>
<span class="t" id="t31" style="left:608.40px;top:248.00px;font-size:11.5px;color:#444444;transform:scaleX(0.9133);">Usage:</span>
<span class="t" id="t32" style="left:340.50px;top:304.00px;font-size:13px;color:#000;font-weight:bold;-webkit-text-stroke:0;transform:scaleX(0.9383);">Customers</span>
<span class="t" id="t33" style="left:340.40px;top:328.00px;font-size:11.5px;color:#6d6d6d;transform:scaleX(1.0075);">Hierarchy:</span>
<span class="t" id="t34" style="left:412.00px;top:328.00px;font-size:11.5px;color:#6d6d6d;transform:scaleX(1.0109);">Loyal customer</span>
<span class="t" id="t35" style="left:384.40px;top:354.00px;font-size:11.5px;color:#000;transform:scaleX(1.0085);">Loyalty</span>
<span class="t" id="t36" style="left:403.50px;top:371.00px;font-size:11.5px;color:#000;transform:scaleX(0.9560);">Desert Wholesales</span>
<span class="t" id="t37" style="left:403.50px;top:389.00px;font-size:11.5px;color:#000;transform:scaleX(0.9735);">Owl Wholesales</span>
<span class="t" id="t38" style="left:403.50px;top:407.00px;font-size:11.5px;color:#000;transform:scaleX(0.9684);">Sparrow Retail</span>
<span class="t" id="t39" style="left:691.60px;top:330.00px;font-size:11.5px;color:#707070;transform:scaleX(0.7714);">&gt;</span>
<span class="t" id="t40" style="left:691.60px;top:359.00px;font-size:11.5px;color:#707070;transform:scaleX(0.7714);">&lt;</span>
<span class="t" id="t41" style="left:787.60px;top:328.00px;font-size:11.5px;color:#000;transform:scaleX(0.9284);">FUN000002</span>
<span class="t" id="t42" style="left:806.50px;top:346.00px;font-size:11.5px;color:#000;transform:scaleX(0.9549);">Desert Wholesales</span>
<span class="t" id="t43" style="left:743.40px;top:523.00px;font-size:11.5px;color:#000;font-weight:bold;-webkit-text-stroke:0;transform:scaleX(1.0057);">Total fund</span>
<span class="t" id="t44" style="left:743.40px;top:547.00px;font-size:11.5px;color:#444444;transform:scaleX(1.0031);">Budgeted:</span>
<span class="t" id="t45" style="left:837.40px;top:547.00px;font-size:11.5px;color:#000;transform:scaleX(0.9263);">2,000.00</span>
<span class="t" id="t46" style="left:896.30px;top:547.00px;font-size:11.5px;color:#444444;transform:scaleX(1.0247);">Distributed:</span>
<span class="t" id="t47" style="left:1017.80px;top:547.00px;font-size:11.5px;color:#000;transform:scaleX(0.9369);">0.00</span>
<span class="t" id="t48" style="left:743.40px;top:582.00px;font-size:11.5px;color:#000;font-weight:bold;-webkit-text-stroke:0;transform:scaleX(1.0010);">Current hierarchy level</span>
<span class="t" id="t49" style="left:743.40px;top:606.00px;font-size:11.5px;color:#444444;transform:scaleX(1.0031);">Budgeted:</span>
<span class="t" id="t50" style="left:858.00px;top:606.00px;font-size:11.5px;color:#000;transform:scaleX(0.9324);">0.00</span>
<span class="t" id="t51" style="left:896.30px;top:606.00px;font-size:11.5px;color:#444444;transform:scaleX(1.0247);">Distributed:</span>
<span class="t" id="t52" style="left:1017.80px;top:606.00px;font-size:11.5px;color:#000;transform:scaleX(0.9369);">0.00</span>
<span class="t" id="t53" style="left:743.40px;top:641.00px;font-size:11.5px;color:#000;font-weight:bold;-webkit-text-stroke:0;transform:scaleX(0.9933);">One level up</span>
<span class="t" id="t54" style="left:743.40px;top:665.00px;font-size:11.5px;color:#444444;transform:scaleX(1.0031);">Budgeted:</span>
<span class="t" id="t55" style="left:837.40px;top:665.00px;font-size:11.5px;color:#000;transform:scaleX(0.9263);">2,000.00</span>
<span class="t" id="t56" style="left:896.30px;top:665.00px;font-size:11.5px;color:#444444;transform:scaleX(1.0247);">Distributed:</span>
<span class="t" id="t57" style="left:1017.80px;top:665.00px;font-size:11.5px;color:#000;transform:scaleX(0.9369);">0.00</span>
<span class="t" id="t58" style="left:340.60px;top:695.00px;font-size:13px;color:#000;font-weight:bold;-webkit-text-stroke:0;transform:scaleX(0.9754);">Items</span>
<span class="t" id="t59" style="left:355.30px;top:722.00px;font-size:11.5px;color:#a9a9a9;transform:scaleX(1.0233);">Add products</span>
<span class="t" id="t60" style="left:465.20px;top:722.00px;font-size:11.5px;color:#a9a9a9;transform:scaleX(0.9782);">Remove</span>
<span class="t" id="t61" style="left:526.96px;top:722.00px;font-size:11.5px;color:#1a1a50;transform:scaleX(1.0375);">Inventory</span>
<span class="t" id="t62" style="left:364.56px;top:746.00px;font-size:11.5px;color:#000;transform:scaleX(1.0389);">Item number</span>
<span class="t" id="t63" style="left:450.40px;top:746.00px;font-size:11.5px;color:#000;transform:scaleX(1.0239);">Product name</span>
<span class="t" id="t64" style="left:365.60px;top:765.00px;font-size:11.5px;color:#000;transform:scaleX(0.8838);">D0001</span>
<span class="t" id="t65" style="left:450.40px;top:765.00px;font-size:11.5px;color:#000;transform:scaleX(0.9683);">MidRangeSpeaker</span>
<span class="t" id="t66" style="left:228.50px;top:832.00px;font-size:11.5px;color:#222;transform:scaleX(1.0493);">A unique identifier for a promotion fund.</span>
<span class="t" id="t67" style="left:1058.00px;top:832.00px;font-size:11.5px;color:#222;transform:scaleX(0.9490);">(4)</span>
<span class="t" id="t68" style="left:1087.20px;top:832.00px;font-size:11.5px;color:#222;transform:scaleX(0.9343);">USD</span>
<span class="t" id="t69" style="left:1121.70px;top:832.00px;font-size:11.5px;color:#222;transform:scaleX(0.9835);">usmf</span>
<span class="t" id="t70" style="left:1184.00px;top:832.00px;font-size:11.5px;color:#000;transform:scaleX(0.9722);">Close</span>
</body></html>
